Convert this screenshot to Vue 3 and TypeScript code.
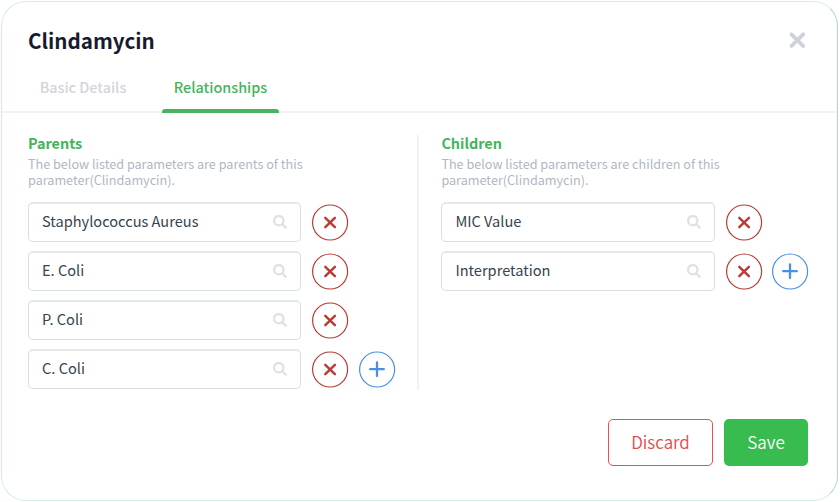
<script setup lang="ts">
interface Group {
  title: string
  kind: string
  items: string[]
}

const entity = 'Clindamycin'
const groups: Group[] = [
  { title: 'Parents', kind: 'parents', items: ['Staphylococcus Aureus', 'E. Coli', 'P. Coli', 'C. Coli'] },
  { title: 'Children', kind: 'children', items: ['MIC Value', 'Interpretation'] },
]
</script>

<template>
  <div class="page">
    <section class="modal">
      <header class="head">
        <h1 class="title">{{ entity }}</h1>
        <button class="close" aria-label="Close">
          <svg width="18" height="18" viewBox="0 0 18 18"><path d="M3.5 3.3 L15.2 15 M15.2 3.3 L3.5 15" /></svg>
        </button>
      </header>
      <nav class="tabs">
        <button class="tab">Basic Details</button>
        <button class="tab active">Relationships<span class="bar" /></button>
      </nav>
      <div class="columns">
        <div v-for="g in groups" :key="g.kind" class="group" :class="g.kind">
          <h2 class="group-title">{{ g.title }}</h2>
          <p class="desc">The below listed parameters are {{ g.kind }} of this<br />parameter({{ entity }}).</p>
          <div class="rows">
            <div v-for="(item, i) in g.items" :key="item" class="row">
              <div class="field">
                <span class="value">{{ item }}</span>
                <svg class="search" width="14" height="14" viewBox="0 0 14 14">
                  <circle cx="5.8" cy="5.7" r="4.7" /><path d="M9.3 9.2 L12.7 12.6" />
                </svg>
              </div>
              <button class="round remove" aria-label="Remove">
                <svg width="37" height="37" viewBox="0 0 37 37">
                  <circle cx="18.1" cy="18.5" r="17.5" /><path class="mark" d="M13.3 13.8 L22.9 23.2 M22.9 13.8 L13.3 23.2" />
                </svg>
              </button>
              <button v-if="i === g.items.length - 1" class="round add" aria-label="Add">
                <svg width="37" height="37" viewBox="0 0 37 37">
                  <circle cx="18.1" cy="18.5" r="17.5" /><path class="mark" d="M18 11.4 V25 M11.2 18.2 H24.8" />
                </svg>
              </button>
            </div>
          </div>
        </div>
      </div>
      <footer class="actions">
        <button class="btn discard">Discard</button>
        <button class="btn save">Save</button>
      </footer>
    </section>
  </div>
</template>

<style>
body {
  background: #fff;
}
</style>

<style scoped>
.page {
  box-sizing: border-box;
  height: 502px;
  padding: 1px 2px 1px 1px;
  overflow: hidden;
  font-family: "Noto Sans CJK SC", "Noto Sans", sans-serif;
}
.modal {
  box-sizing: border-box;
  height: 500px;
  display: flex;
  flex-direction: column;
  border: 1px solid #d3efdc;
  border-right-color: #a9dcb8;
  border-radius: 25px;
  background: #fff;
}
button {
  box-sizing: border-box;
  margin: 0;
  padding: 0;
  border: 0;
  background: none;
  font-family: inherit;
}
svg {
  display: block;
  fill: none;
  stroke: currentColor;
  stroke-linecap: round;
}
.head {
  display: flex;
  justify-content: space-between;
  align-items: center;
  height: 62px;
  padding: 14px 31px 0 26px;
  box-sizing: border-box;
}
.title {
  margin: 0;
  font-size: 20.6px;
  line-height: 30px;
  font-weight: 700;
  color: #171b2d;
}
.close {
  color: #cdd1d9;
}
.close svg {
  stroke-width: 3.8;
}
.tabs {
  display: flex;
  box-sizing: border-box;
  height: 49px;
  padding-left: 22px;
  gap: 20px;
  border-bottom: 2px solid #f1f2f2;
}
.tab {
  width: 118px;
  height: 49px;
  font-size: 14.4px;
  line-height: 20px;
  font-weight: 500;
  color: #d2d5da;
}
.tab.active {
  display: flex;
  flex-direction: column;
  align-items: center;
  width: 117px;
  padding-top: 13px;
  color: #44b45b;
}
.bar {
  width: 117px;
  height: 4px;
  margin-top: 12px;
  flex: none;
  border-radius: 3px 3px 0 0;
  background: #48b45d;
}
.tab:not(.active) {
  padding-bottom: 3px;
}
.columns {
  display: flex;
  height: 255px;
  margin-top: 22px;
  padding-left: 26px;
}
.group {
  box-sizing: border-box;
  width: 391px;
}
.parents {
  border-right: 2px solid #f1f2f2;
}
.children {
  padding-left: 22.4px;
}
.group-title {
  margin: -1px 0 0;
  font-size: 14.4px;
  line-height: 18px;
  font-weight: 700;
  color: #44b45b;
}
.desc {
  margin: 4px 0 0;
  font-size: 12.63px;
  line-height: 16px;
  color: #b0b7c2;
  white-space: nowrap;
}
.rows {
  display: flex;
  flex-direction: column;
  gap: 9px;
  margin-top: 14px;
}
.row {
  display: flex;
  align-items: center;
  height: 40px;
}
.field {
  display: flex;
  justify-content: space-between;
  align-items: center;
  box-sizing: border-box;
  flex: none;
  width: 273.4px;
  height: 40px;
  padding: 0 13px;
  border: 1px solid #d7dee0;
  border-top: 2px solid #e3e8eb;
  border-radius: 5px;
}
.value {
  margin-top: -3px;
  font-size: 14.6px;
  line-height: 20px;
  color: #37434f;
}
.search {
  margin-top: -1px;
  color: #dfe1e2;
  stroke-width: 2.3;
}
.round {
  flex: none;
  width: 36px;
  height: 37px;
}
.round svg {
  stroke-width: 1.2;
}
.remove {
  margin-left: 11px;
  color: #b83b34;
}
.remove .mark {
  stroke-width: 2.4;
}
.add {
  margin-left: 10.5px;
  color: #4a90e2;
}
.add .mark {
  stroke-width: 2.3;
}
.actions {
  display: flex;
  justify-content: flex-end;
  gap: 11px;
  margin-top: 29px;
  padding-right: 29px;
}
.btn {
  height: 47px;
  padding-bottom: 2px;
  border-radius: 5px;
  font-size: 17px;
  line-height: 24px;
  font-weight: 350;
}
.discard {
  width: 105px;
  border: 1px solid #e8504f;
  color: #e64b4b;
}
.save {
  width: 84px;
  background: #38bc50;
  color: #fff;
}
</style>
